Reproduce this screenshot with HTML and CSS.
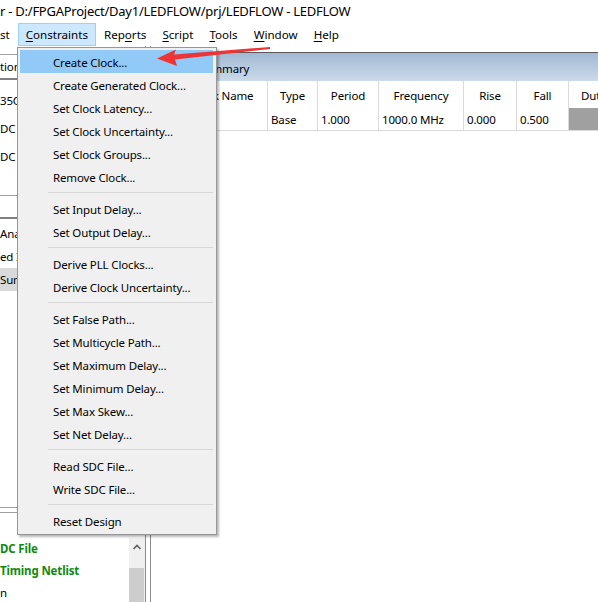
FILE: index.html
```html
<!DOCTYPE html>
<html>
<head>
<meta charset="utf-8">
<title>Timing Analyzer</title>
<link rel="stylesheet" href="styles.css">
</head>
<body>
<div class="titlebar">r - D:/FPGAProject/Day1/LEDFLOW/prj/LEDFLOW - LEDFLOW</div>
<div class="menubar">
  <span class="mi first">st</span>
  <span class="mi active"><u>C</u>onstraints</span>
  <span class="mi">Rep<u>o</u>rts</span>
  <span class="mi"><u>S</u>cript</span>
  <span class="mi"><u>T</u>ools</span>
  <span class="mi"><u>W</u>indow</span>
  <span class="mi"><u>H</u>elp</span>
</div>
<div class="main">
  <div class="left">
    <div class="pane1">
      <div class="phead">tion</div>
      <div class="plist tall">
        <div class="row">35C</div>
        <div class="row">DC I</div>
        <div class="row">DC N</div>
      </div>
    </div>
    <div class="pane2">
      <div class="phead2"></div>
      <div class="plist">
        <div class="row">Ana</div>
        <div class="row">ed I/</div>
        <div class="row sel">Sum</div>
      </div>
    </div>
    <div class="pane3">
      <div class="p3head"></div>
      <div class="p3body">
        <div class="tasks">
          <div class="task done">DC File</div>
          <div class="task done">Timing Netlist</div>
          <div class="task">n</div>
        </div>
        <div class="vscroll">
          <div class="sbtn"><svg width="16" height="18" viewBox="0 0 16 18"><path d="M4.5 11 L8 7.5 L11.5 11" fill="none" stroke="#606060" stroke-width="1.6"/></svg></div>
          <div class="strack"></div>
          <div class="sthumb"></div>
        </div>
      </div>
    </div>
  </div>
  <div class="splitter"></div>
  <div class="right">
    <div class="rhead">Clocks Summary</div>
    <div class="grid">
      <div class="trow thead">
        <div class="cell"></div>
        <div class="cell">Clock Name</div>
        <div class="cell">Type</div>
        <div class="cell">Period</div>
        <div class="cell">Frequency</div>
        <div class="cell">Rise</div>
        <div class="cell">Fall</div>
        <div class="cell">Duty Cycle</div>
      </div>
      <div class="trow tdata">
        <div class="cell"></div>
        <div class="cell"></div>
        <div class="cell">Base</div>
        <div class="cell">1.000</div>
        <div class="cell">1000.0 MHz</div>
        <div class="cell">0.000</div>
        <div class="cell">0.500</div>
        <div class="cell duty"></div>
      </div>
    </div>
  </div>
</div>

<div class="menu">
  <div class="item hl">Create Clock...</div>
  <div class="item">Create Generated Clock...</div>
  <div class="item">Set Clock Latency...</div>
  <div class="item">Set Clock Uncertainty...</div>
  <div class="item">Set Clock Groups...</div>
  <div class="item">Remove Clock...</div>
  <div class="sep"></div>
  <div class="item">Set Input Delay...</div>
  <div class="item">Set Output Delay...</div>
  <div class="sep"></div>
  <div class="item">Derive PLL Clocks...</div>
  <div class="item">Derive Clock Uncertainty...</div>
  <div class="sep"></div>
  <div class="item">Set False Path...</div>
  <div class="item">Set Multicycle Path...</div>
  <div class="item">Set Maximum Delay...</div>
  <div class="item">Set Minimum Delay...</div>
  <div class="item">Set Max Skew...</div>
  <div class="item">Set Net Delay...</div>
  <div class="sep"></div>
  <div class="item">Read SDC File...</div>
  <div class="item">Write SDC File...</div>
  <div class="sep"></div>
  <div class="item">Reset Design</div>
</div>

<svg class="arrow" width="130" height="32" viewBox="0 0 130 32">
  <polygon points="7,18.5 26,9.5 24,14.5 120,7 120,9 25,19.5 27,26" fill="#ee3535"/>
</svg>
</body>
</html>
```

FILE: styles.css
```css
* { box-sizing: border-box; }
html, body { margin: 0; padding: 0; }
body {
  width: 598px;
  height: 602px;
  overflow: hidden;
  position: relative;
  background: #ffffff;
  color: #000000;
  font-family: "Noto Sans", "Open Sans", sans-serif;
  font-size: 11.5px;
  letter-spacing: -0.15px;
}

.titlebar {
  height: 23px;
  line-height: 22px;
  font-size: 13px;
  letter-spacing: -0.25px;
  white-space: nowrap;
  overflow: hidden;
}

.menubar {
  height: 23px;
  display: flex;
  white-space: nowrap;
  font-size: 11.6px;
  letter-spacing: 0;
}
.mi {
  padding: 0 7px;
  border: 1px solid transparent;
  line-height: 21px;
}
.mi.first { padding-left: 0; border-left: 0; }
.mi.active { background: #cce8ff; border-color: #99d1ff; }
.mi u { text-decoration-thickness: 1px; text-underline-offset: 2px; }

.main {
  display: flex;
  height: 556px;
}

/* left column */
.left {
  width: 146px;
  border-right: 1px solid #8c8c8c;
  display: flex;
  flex-direction: column;
  white-space: nowrap;
  overflow: hidden;
}
.pane1 {
  flex: 0 0 150px;
  padding-top: 8px;
  border-bottom: 1px solid #a0a0a0;
}
.phead {
  height: 26px;
  line-height: 23px;
  border-top: 1px solid #a0a0a0;
  border-bottom: 2px solid #808080;
}
.plist.tall { padding-top: 7px; }
.plist.tall .row { height: 28px; line-height: 28px; }
.pane2 {
  flex: 0 0 312px;
  border-bottom: 1px solid #a0a0a0;
}
.phead2 {
  height: 23px;
  border-bottom: 2px solid #808080;
}
.pane2 .plist { padding-top: 3px; }
.row { height: 23px; line-height: 23px; }
.row.sel { background: #d9d9d9; }

.pane3 {
  margin-top: 4px;
  flex: 1 1 auto;
  min-height: 0;
  overflow: hidden;
  border-top: 1px solid #a0a0a0;
  display: flex;
  flex-direction: column;
}
.p3head { flex: 0 0 25px; }
.p3body { flex: 1 1 auto; min-height: 0; display: flex; }
.tasks { flex: 1; }
.task { height: 22px; line-height: 22px; }
.task.done { color: #0f8a0f; font-weight: bold; }
.vscroll {
  width: 16px;
  background: #f0f0f0;
  display: flex;
  flex-direction: column;
}
.sbtn { flex: 0 0 18px; }
.sbtn svg { display: block; }
.strack { flex: 0 0 12px; }
.sthumb { flex: 1; background: #cdcdcd; margin-right: 1px; }

.splitter { width: 4px; }

/* right column */
.right {
  flex: 1;
  border-left: 1px solid #8c8c8c;
  overflow: hidden;
  padding-top: 6px;
}
.rhead {
  height: 29px;
  border-top: 1px solid #5a5a5a;
  background: linear-gradient(#a2b8d4, #cbdaea);
  padding: 3px 0 0 11px;
  line-height: 26px;
  white-space: nowrap;
}
.grid { width: 500px; }
.trow {
  display: grid;
  grid-template-columns: 26px 91px 50px 61px 85px 53px 52px 80px;
}
.cell {
  border-right: 1px solid #dadada;
  white-space: nowrap;
  overflow: hidden;
}
.thead .cell {
  height: 27px;
  line-height: 25px;
  padding-top: 2px;
  text-align: center;
}
.tdata { border-bottom: 1px solid #dadada; }
.tdata .cell {
  height: 22px;
  line-height: 20px;
  padding: 2px 0 0 3px;
}
.cell.duty { background: #a0a0a0; }

/* dropdown menu */
.menu {
  position: absolute;
  left: 17px;
  top: 47px;
  width: 200px;
  height: 488px;
  padding: 2px 3px 2px 2px;
  background: #f0f0f0;
  border: 1px solid #979797;
  box-shadow: 2px 2px 2px rgba(0, 0, 0, 0.28);
}
.item {
  height: 23px;
  line-height: 21px;
  padding: 2px 0 0 33px;
  white-space: nowrap;
}
.item.hl { background: #91c9f7; }
.sep {
  height: 1px;
  margin: 4px 0 4px 28px;
  background: #d7d7d7;
}

.arrow {
  position: absolute;
  left: 150px;
  top: 40px;
}
```
